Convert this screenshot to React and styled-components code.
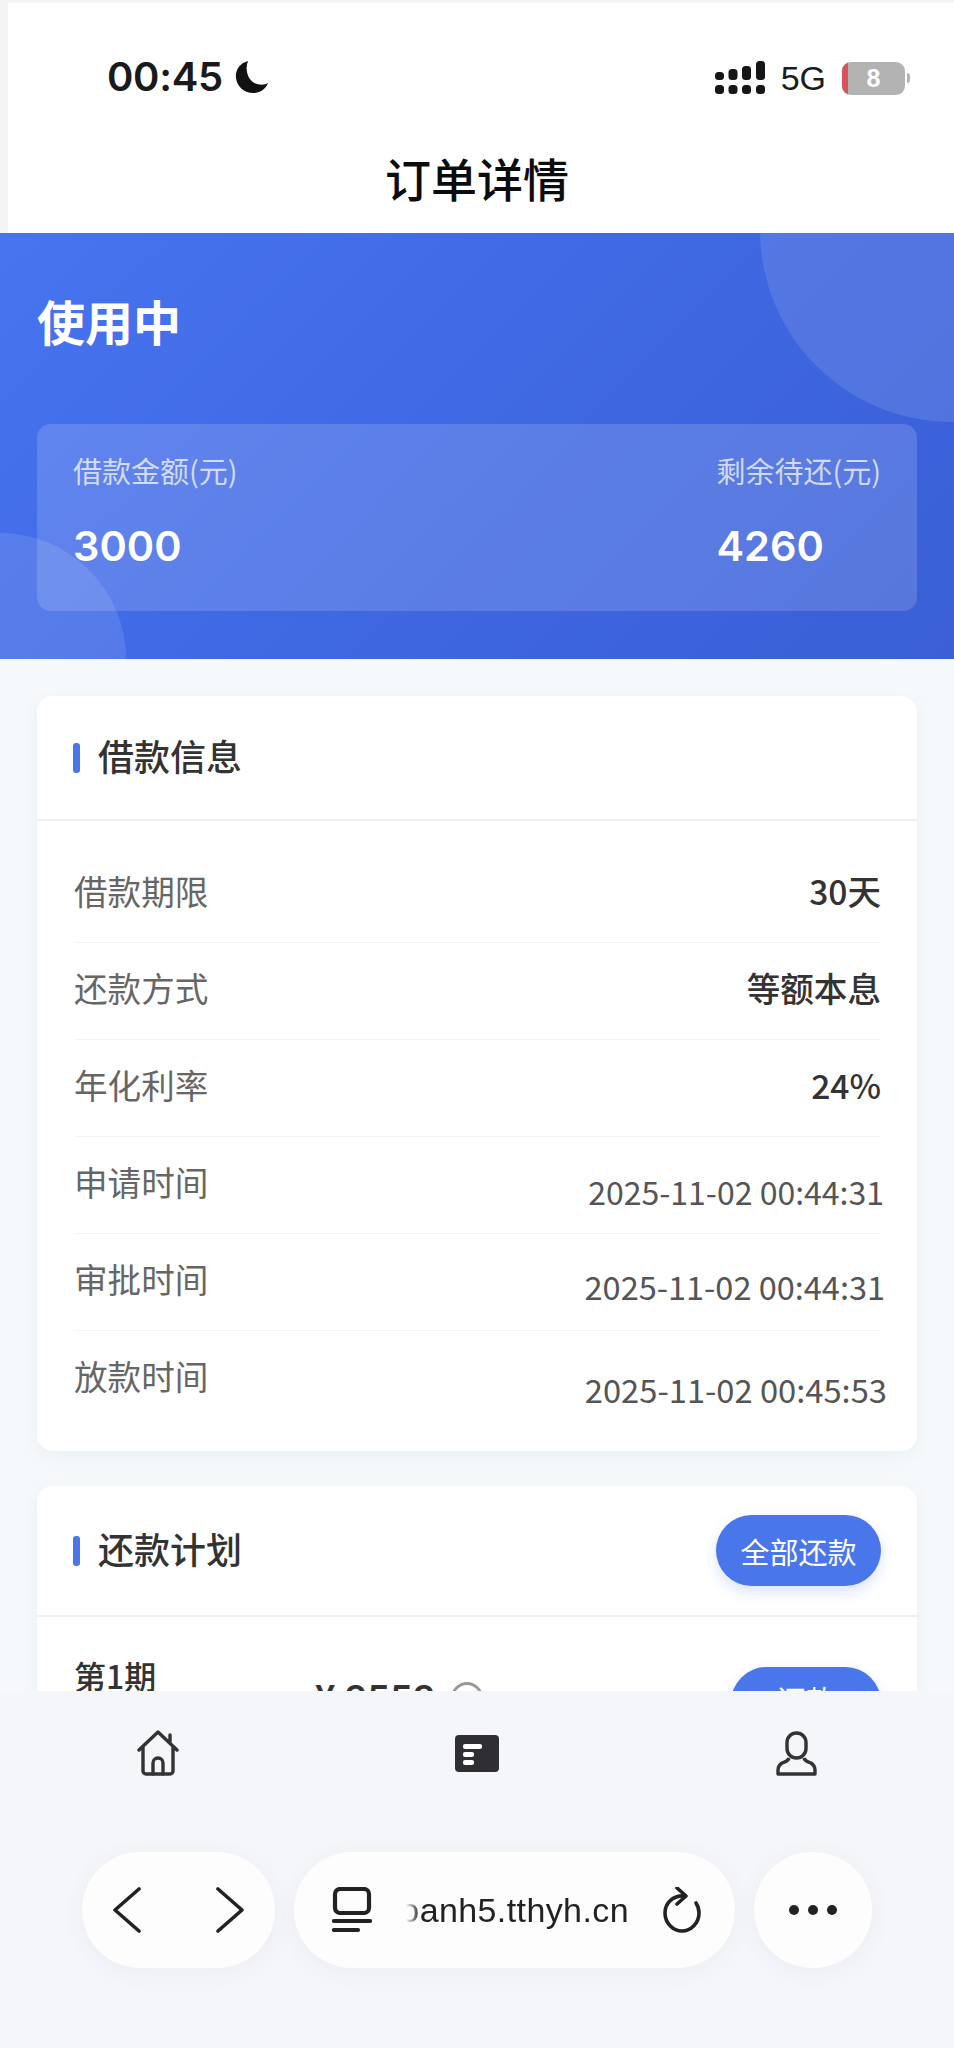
import React from "react";
import styled, { createGlobalStyle } from "styled-components";

const cjk = `"Noto Sans CJK SC", "Noto Sans", sans-serif`;
const latin = `Inter, "Noto Sans CJK SC", sans-serif`;

const Global = createGlobalStyle`
  html, body { margin: 0; padding: 0; background: #f5f9fb; }
  * { box-sizing: border-box; }
`;

const Screen = styled.div`
  width: 954px; height: 2048px; display: flex; flex-direction: column;
  overflow: hidden; background: #f5f9fb; font-family: ${cjk};
`;
const Content = styled.main`
  flex: 0 0 1691px; height: 1691px; overflow: hidden; display: flex; flex-direction: column;
`;
const TopArea = styled.header`
  height: 233px; padding: 3px 0 0 8px; background: #f4f4f4; flex: none;
`;
const TopInner = styled.div`
  height: 230px; background: #fff; display: flex; flex-direction: column;
`;
const StatusBar = styled.div`
  height: 118px; display: flex; align-items: flex-end; justify-content: space-between;
  padding: 0 44px 22px 99px; flex: none;
`;
const StatusGroup = styled.div`
  display: flex; align-items: center; gap: ${p => p.$gap}px; padding-bottom: ${p => p.$lift || 0}px;
`;
const Time = styled.span`
  font: 600 40px/44px ${latin}; color: #1a1a1a; letter-spacing: -0.3px;
`;
const Net = styled.span`
  font: 500 34px/36px "Liberation Sans", sans-serif; color: #1c1c1c;
`;
const Battery = styled.div`
  position: relative; width: 63px; height: 33px; border-radius: 9px; overflow: hidden;
  background: #b3b3b3; display: flex; align-items: center; justify-content: center;
  color: #fff; font: 700 25px/33px "Liberation Sans", sans-serif;
  &::before { content: ""; position: absolute; left: 0; top: 0; bottom: 0; width: 6px; background: #db5159; }
`;
const BatteryWrap = styled.div`display: flex; align-items: center; gap: 2px;`;
const Nub = styled.i`width: 3px; height: 10px; border-radius: 0 3px 3px 0; background: #b3b3b3;`;
const PageTitle = styled.h1`
  margin: 26px 0 0; text-align: center; font: 500 46px/60px ${cjk}; color: #0c0c0c;
  padding-right: 8px;
`;

const Hero = styled.section`
  position: relative; overflow: hidden; height: 426px; flex: none; padding: 57px 37px 48px;
  background: linear-gradient(135deg, #4874f0 0%, #3f68e3 50%, #3a5fd6 100%);
  display: flex; flex-direction: column; justify-content: space-between;
`;
const Bubble = styled.span`
  position: absolute; border-radius: 50%; background: rgba(255,255,255,.11);
  width: ${p => p.$size}px; height: ${p => p.$size}px;
  ${p => p.$tr ? "right: -190px; top: -195px;" : "left: -126px; bottom: -126px;"}
`;
const Status = styled.h2`
  position: relative; margin: 0; font: 700 48px/60px ${cjk}; color: #fff;
`;
const StatBox = styled.div`
  position: relative; height: 187px; padding: 22px 36px 0; border-radius: 14px;
  background: rgba(255,255,255,.15); display: flex; justify-content: space-between;
`;
const Stat = styled.div`display: flex; flex-direction: column; gap: 27px;`;
const StatLabel = styled.span`
  font: 400 29px/48px ${cjk}; color: rgba(255,255,255,.72);
`;
const StatValue = styled.span`
  font: 600 41.5px/50px ${latin}; color: #fff;
`;

const Card = styled.section`
  margin: ${p => p.$top}px 37px 0; background: #fff; border-radius: 16px; flex: none;
  box-shadow: 0 4px 16px rgba(90,110,140,.06);
`;
const CardHead = styled.div`
  height: ${p => p.$h}px; display: flex; align-items: center; justify-content: space-between;
  padding: 0 36px; border-bottom: 2px solid #eff0f2;
`;
const CardTitle = styled.h3`
  margin: 0; display: flex; align-items: center; gap: 18px; padding-bottom: 5px;
  font: 500 36px/48px ${cjk}; color: #333;
  &::before { content: ""; width: 7px; height: 30px; border-radius: 3px; background: #4a76ec; margin-top: 6px; }
`;
const Rows = styled.div`padding: 25px 36px 23px 37px;`;
const Row = styled.div`
  height: 97px; display: flex; align-items: center; justify-content: space-between;
  border-bottom: 1px solid ${p => p.$last ? "transparent" : "#f3f4f5"};
`;
const RowLabel = styled.span`font: 400 33.6px/44px ${cjk}; color: #666; padding-bottom: 6px;`;
const RowValue = styled.span`font: 500 33.6px/44px ${cjk}; color: #333; padding-bottom: 6px;`;
const DateValue = styled.span`
  font: 400 ${p => p.$size}px/44px ${cjk}; color: #555;
  margin-right: ${p => p.$shift}px; padding-top: ${p => p.$drop}px;
`;

const PlanRow = styled.div`
  position: relative; padding: 35px 36px 0 37px; display: flex; align-items: flex-start;
`;
const Period = styled.span`font: 500 32px/46px ${cjk}; color: #333; width: 241px;`;
const Amount = styled.span`
  display: flex; align-items: center; gap: 16px; font: 600 36px/44px ${latin}; color: #333; padding-top: 24px;
`;
const Info = styled.i`
  width: 32px; height: 32px; border-radius: 50%; border: 3px solid #999;
`;
const PayButton = styled.button`
  border: 0; margin: ${p => p.$mt || 0}px 0 0 auto; color: #fff; background: #4a76ec; font-family: ${cjk};
  width: ${p => p.$w}px; height: ${p => p.$h}px; font-size: 29px; border-radius: 36px;
  box-shadow: 0 6px 14px rgba(74,118,236,.2); padding: 0 0 ${p => p.$lift || 0}px; flex: none;
`;

const Bottom = styled.footer`
  flex: 1; background: #f5f6fa; display: flex; flex-direction: column;
`;
const TabBar = styled.nav`
  height: 161px; display: flex; padding-top: 39px; flex: none;
`;
const Tab = styled.div`
  width: ${p => p.$w}px; display: flex; justify-content: center; align-items: center; height: 46px; flex: none;
`;
const Browser = styled.div`
  display: flex; gap: 19px; padding-left: 82px; height: 116px;
`;
const Pill = styled.div`
  width: ${p => p.$w}px; height: 116px; border-radius: 58px; background: #fdfdfd;
  box-shadow: 0 4px 24px rgba(60,70,90,.05); display: flex; align-items: center;
  justify-content: ${p => p.$j || "space-between"}; padding: 0 ${p => p.$right || p.$pad}px 0 ${p => p.$pad}px; flex: none;
`;
const Url = styled.span`
  width: 223px; overflow: hidden; display: flex; justify-content: flex-end; white-space: nowrap;
  font: 400 34px/44px "Liberation Sans", sans-serif; color: #222; letter-spacing: .4px;
  -webkit-mask-image: linear-gradient(90deg, transparent 0, #000 14px);
  mask-image: linear-gradient(90deg, transparent 0, #000 14px);
`;

const Moon = () => (
  <svg width="34" height="34" viewBox="0 0 34 34"><path d="M13 1C5 3 0 10 1 18c1 9 9 15 17 15 7 0 13-4 15-10-3 2-7 2-11 1C14 22 9 11 13 1z" fill="#111"/></svg>
);
const Signal = () => (
  <svg width="50" height="34" viewBox="0 0 50 34" fill="#161616">
    <rect x="0" y="11" width="9" height="8" rx="3.5"/><rect x="13.500" y="8" width="9" height="11" rx="3.5"/>
    <rect x="27" y="5" width="9" height="14" rx="3.5"/><rect x="41" y="0" width="9" height="19" rx="3.5"/>
    <rect x="0" y="24" width="9" height="9" rx="3.5"/><rect x="13.500" y="24" width="9" height="9" rx="3.5"/>
    <rect x="27" y="24" width="9" height="9" rx="3.5"/><rect x="41" y="24" width="9" height="9" rx="3.5"/>
  </svg>
);
const Home = () => (
  <svg width="42" height="46" viewBox="0 0 42 46" fill="none" stroke="#333" strokeWidth="3.4" strokeLinejoin="round" strokeLinecap="round">
    <path d="M2 20 21 2l19 18M6 17v24a3 3 0 0 0 3 3h24a3 3 0 0 0 3-3V17M33 5v8"/><path d="M16 44V33a5 5 0 0 1 10 0v11"/>
  </svg>
);
const Doc = () => (
  <svg width="44" height="37" viewBox="0 0 44 37"><rect width="44" height="37" rx="4" fill="#2f2f33"/><rect x="8" y="9" width="19" height="5" rx="2" fill="#fff"/><rect x="8" y="17" width="11" height="5" rx="2" fill="#fff"/><rect x="8" y="25" width="11" height="5" rx="2" fill="#fff"/></svg>
);
const User = () => (
  <svg width="41" height="45" viewBox="0 0 41 45" fill="none" stroke="#333" strokeWidth="3.400" strokeLinejoin="round">
    <rect x="11" y="2" width="19" height="25" rx="9.500"/><path d="M13 27c-1 4-5 4-7 5-3 2-4 5-4 7v4h37v-4c0-2-1-5-4-7-2-1-6-1-7-5"/>
  </svg>
);
const Back = ({ flip }) => (
  <svg width="30" height="46" viewBox="0 0 30 46" fill="none" stroke="#222" strokeWidth="3.600" strokeLinecap="round" strokeLinejoin="round" style={flip ? { transform: "scaleX(-1)" } : undefined}><path d="M27 2 3 23l24 21"/></svg>
);
const Tabs = () => (
  <svg width="40" height="46" viewBox="0 0 40 46" fill="none" stroke="#222" strokeWidth="4.2" strokeLinecap="round"><rect x="3" y="2" width="34" height="24" rx="5"/><path d="M2 34h36M2 43h24"/></svg>
);
const Reload = () => (
  <svg width="38" height="46" viewBox="0 0 38 46" fill="none" stroke="#222" strokeWidth="3.600" strokeLinecap="round" strokeLinejoin="round"><path d="M22 9C10 8 2 16 2 26c0 10 8 18 17 18s17-8 17-18c0-4-1-7-3-10"/><path d="M14 1l9 8-9 8"/></svg>
);
const Dots = () => (
  <svg width="50" height="12" viewBox="0 0 50 12" fill="#222"><circle cx="6" cy="6" r="5"/><circle cx="25" cy="6" r="5"/><circle cx="44" cy="6" r="5"/></svg>
);

const loan = [["借款期限", "30天"], ["还款方式", "等额本息"], ["年化利率", "24%"]];
const dates = [
  ["申请时间", "2025-11-02 00:44:31", 32, -3, 11],
  ["审批时间", "2025-11-02 00:44:31", 32.5, -4, 8],
  ["放款时间", "2025-11-02 00:45:53", 32.7, -6, 20],
];

export default function App() {
  return (
    <Screen>
      <Global />
      <Content>
        <TopArea>
          <TopInner>
            <StatusBar>
              <StatusGroup $gap={12}><Time>00:45</Time><Moon /></StatusGroup>
              <StatusGroup $gap={16} $lift={3}>
                <Signal /><Net>5G</Net>
                <BatteryWrap><Battery>8</Battery><Nub /></BatteryWrap>
              </StatusGroup>
            </StatusBar>
            <PageTitle>订单详情</PageTitle>
          </TopInner>
        </TopArea>
        <Hero>
          <Bubble $tr $size={384} />
          <Bubble $size={252} />
          <Status>使用中</Status>
          <StatBox>
            <Stat><StatLabel>借款金额(元)</StatLabel><StatValue>3000</StatValue></Stat>
            <Stat><StatLabel>剩余待还(元)</StatLabel><StatValue>4260</StatValue></Stat>
          </StatBox>
        </Hero>
        <Card $top={37}>
          <CardHead $h={125}><CardTitle>借款信息</CardTitle></CardHead>
          <Rows>
            {loan.map(([k, v]) => (
              <Row key={k}><RowLabel>{k}</RowLabel><RowValue>{v}</RowValue></Row>
            ))}
            {dates.map(([k, v, s, m, d], i) => (
              <Row key={k} $last={i === 2}><RowLabel>{k}</RowLabel><DateValue $size={s} $shift={m} $drop={d}>{v}</DateValue></Row>
            ))}
          </Rows>
        </Card>
        <Card $top={35}>
          <CardHead $h={131}>
            <CardTitle>还款计划</CardTitle>
            <PayButton $w={165} $h={71}>全部还款</PayButton>
          </CardHead>
          <PlanRow>
            <Period>第1期</Period>
            <Amount>¥ 3553<Info /></Amount>
            <PayButton $w={150} $h={71} $mt={15} $lift={8}>还款</PayButton>
          </PlanRow>
        </Card>
      </Content>
      <Bottom>
        <TabBar>
          <Tab $w={316}><Home /></Tab>
          <Tab $w={322}><Doc /></Tab>
          <Tab $w={316}><User /></Tab>
        </TabBar>
        <Browser>
          <Pill $w={193} $pad={30}><Back /><Back flip /></Pill>
          <Pill $w={441} $pad={38} $right={34}><Tabs /><Url>oanh5.tthyh.cn</Url><Reload /></Pill>
          <Pill $w={118} $pad={0} $j="center"><Dots /></Pill>
        </Browser>
      </Bottom>
    </Screen>
  );
}
